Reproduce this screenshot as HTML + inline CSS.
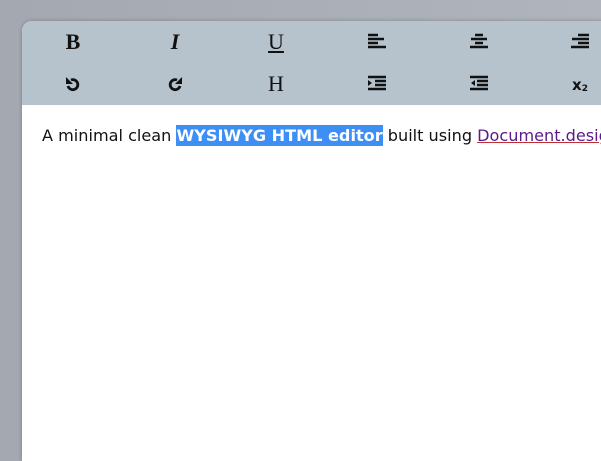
<!DOCTYPE html><html><head><style>
body{margin:0;width:601px;height:449px;overflow:hidden;background:linear-gradient(90deg,#a4a8b1,#b0b4bc);font-family:"DejaVu Sans",sans-serif}
.card{position:absolute;left:22px;top:21px;width:600px;height:440px;background:#fff;border-radius:10px 0 0 0;overflow:hidden;box-shadow:0 0 4px rgba(0,0,0,.25)}
.tb{position:absolute;left:0;top:0;width:600px;height:84px;background:#b6c3cd}
.b{position:absolute;width:40px;height:24px;margin-left:-20px;margin-top:-12px;display:flex;align-items:center;justify-content:center;font-family:"Liberation Serif",serif;font-size:22px;color:#111}
.txt{position:absolute;left:20px;top:105px;font-size:16.1px;color:#111;white-space:nowrap}
.sel{background:#3d8ef5;color:#fff;font-weight:bold;padding:1px 0}
a{color:#5a1a8a;text-decoration:underline;text-decoration-color:#c03030}
</style></head><body><div class="card"><div class="tb">
<div class="b" style="left:51px;top:21px;font-weight:bold">B</div>
<div class="b" style="left:153px;top:21px;font-style:italic;font-weight:bold">I</div>
<div class="b" style="left:254px;top:21px;text-decoration:underline">U</div>
<div class="b" style="left:355px;top:20px"><svg width="20" height="16"><g stroke="#111" stroke-width="2.4"><path d="M1 2h10M1 6h16M1 10h10M1 14h18"/></g></svg></div>
<div class="b" style="left:457px;top:20px"><svg width="20" height="16"><g stroke="#111" stroke-width="2.4"><path d="M6 2h8M2 6h16M6 10h8M1 14h18"/></g></svg></div>
<div class="b" style="left:558px;top:20px"><svg width="20" height="16"><g stroke="#111" stroke-width="2.4"><path d="M8 2h11M2 6h17M8 10h11M1 14h18"/></g></svg></div>
<div class="b" style="left:51px;top:63px"><svg width="16" height="16"><path d="M6 4A5 5 0 1 1 3 10" fill="none" stroke="#111" stroke-width="2.8"/><path d="M1 1v7h7z" fill="#111"/></svg></div>
<div class="b" style="left:153px;top:63px"><svg width="16" height="16"><path d="M10 4A5 5 0 1 0 13 10" fill="none" stroke="#111" stroke-width="2.8"/><path d="M15 1v7h-7z" fill="#111"/></svg></div>
<div class="b" style="left:254px;top:63px">H</div>
<div class="b" style="left:355px;top:62px"><svg width="20" height="16"><g stroke="#111" stroke-width="2.4"><path d="M1 2h18M8 6h11M8 10h11M1 14h18"/></g><path d="M1 5l4 3-4 3z" fill="#111"/></svg></div>
<div class="b" style="left:457px;top:62px"><svg width="20" height="16"><g stroke="#111" stroke-width="2.4"><path d="M1 2h18M8 6h11M8 10h11M1 14h18"/></g><path d="M6 5l-4 3 4 3z" fill="#111"/></svg></div>
<div class="b" style="left:558px;top:64px;font-family:'DejaVu Sans',sans-serif;font-size:15px;font-weight:bold">x<span style="font-size:9px;position:relative;top:4px">2</span></div>
</div>
<div class="txt">A minimal clean <span class="sel">WYSIWYG HTML editor</span> built using <a>Document.designMode</a></div>
</div></body></html>
